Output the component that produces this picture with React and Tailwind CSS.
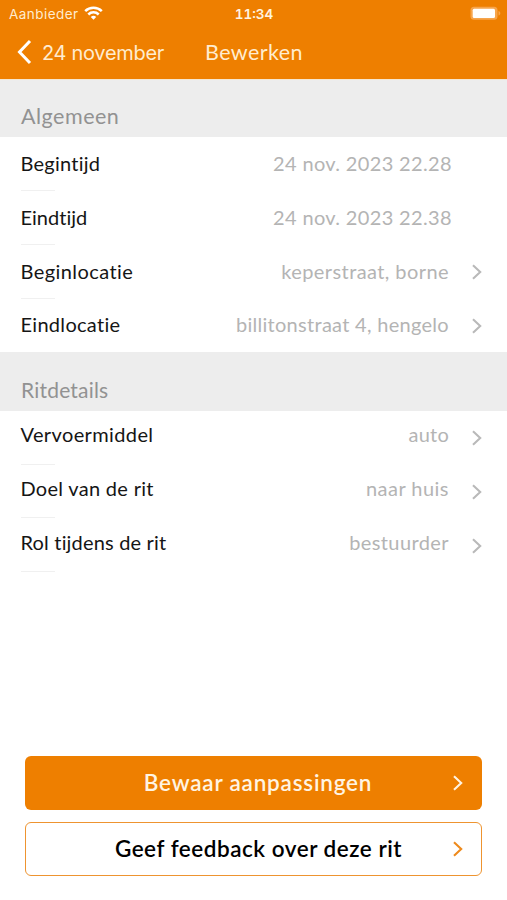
import React from 'react';

const general = [
  { label: 'Begintijd', value: '24 nov. 2023 22.28', labelClass: 'tracking-[0.25px]', valueClass: 'tracking-[0.35px]' },
  { label: 'Eindtijd', value: '24 nov. 2023 22.38', labelClass: 'tracking-[0.02px]', valueClass: 'tracking-[0.35px]' },
  { label: 'Beginlocatie', value: 'keperstraat, borne', link: true, labelClass: 'tracking-[0.42px]', valueClass: 'tracking-[0.42px]' },
  { label: 'Eindlocatie', value: 'billitonstraat 4, hengelo', link: true, labelClass: 'tracking-[0.3px]', valueClass: 'tracking-[0.29px]' },
];

const details = [
  { label: 'Vervoermiddel', value: 'auto', link: true, labelClass: 'tracking-[0.38px]', valueClass: 'tracking-[0.25px]' },
  { label: 'Doel van de rit', value: 'naar huis', link: true, labelClass: 'tracking-[0.3px]', valueClass: 'tracking-[0.47px]' },
  { label: 'Rol tijdens de rit', value: 'bestuurder', link: true, labelClass: 'tracking-[0.18px]', valueClass: 'tracking-[0.4px]' },
];

const Chevron = ({ className }) => (
  <svg className={className} width="12" height="18" viewBox="0 0 12 18" fill="none" stroke="currentColor" strokeWidth="2.1">
    <path d="M2 2.3 9.2 9 2 15.7" />
  </svg>
);

const StatusBar = () => (
  <div className="grid h-7 grid-cols-3 items-center pl-[9px] pr-[6px] font-['Inter',sans-serif] text-[13.5px] text-[#ffeccf]">
    <div className="flex items-center gap-[5px]">
      <span className="tracking-[0.45px]">Aanbieder</span>
      <svg className="-mt-[2px]" width="19" height="14" viewBox="0 0 19 14" fill="none" stroke="#fff" strokeWidth="2.5">
        <path d="M1.2 5.1a11.8 11.8 0 0 1 16.6 0" />
        <path d="M4.3 8.5a7.4 7.4 0 0 1 10.4 0" />
        <path d="M9.5 13.8 6.8 11a3.9 3.9 0 0 1 5.4 0z" fill="#fff" stroke="none" />
      </svg>
    </div>
    <span className="-ml-[2px] text-center font-semibold tabular-nums text-[#fff4e2]">11:34</span>
    <svg className="-mt-px justify-self-end" width="31" height="15" viewBox="0 0 31 15">
      <rect x="0.5" y="0.7" width="27" height="13" rx="3.5" fill="#f6a54d" />
      <rect x="2.7" y="2.7" width="22.3" height="9.3" rx="1.5" fill="#fff" />
      <path d="M28.5 5v4.6c1-.3 1.8-1.2 1.8-2.3S29.5 5.3 28.5 5z" fill="#f6a54d" />
    </svg>
  </div>
);

const SectionHeader = ({ children, className }) => (
  <h2 className={`flex h-[58.3px] items-end bg-[#ededed] px-[21px] pb-[8px] leading-[26px] text-[#929292] ${className}`}>
    {children}
  </h2>
);

const Row = ({ item, last, raised }) => (
  <div className="flex h-[53.8px] flex-col pl-[20.5px] pr-[24px]">
    <div className={`flex flex-1 items-center text-[20px] ${raised ? 'pb-[4px]' : ''}`}>
      <span className={`flex-1 pb-[1.5px] text-[#151515] ${item.labelClass}`}>{item.label}</span>
      <span className={`pb-[1.5px] text-[#b4b4b4] ${item.link ? 'mr-[22px]' : 'mr-[31px]'} ${item.valueClass}`}>{item.value}</span>
      {item.link && <Chevron className={`text-[#b9b9b9] ${raised ? 'mt-[6px]' : 'mt-px'}`} />}
    </div>
    <div className={`h-px w-[34px] ${last ? '' : 'bg-[#f0f0f0]'}`} />
  </div>
);

export default function App() {
  return (
    <div className="flex h-[900px] w-[507px] flex-col overflow-hidden bg-white font-['Lato',sans-serif]">
      <header className="h-[79px] bg-[#ee7f00]">
        <StatusBar />
        <div className="flex h-[50px] items-center pl-[16px] text-[#ffeccf]">
          <svg className="-mt-[2px]" width="17" height="26" viewBox="0 0 17 26" fill="none" stroke="#fff" strokeWidth="3">
            <path d="M14 2 3.5 13 14 24" />
          </svg>
          <span className="ml-[9px] w-[163px] font-['Inter',sans-serif] text-[20px] tracking-[-0.3px]">24 november</span>
          <h1 className="-mt-[2px] text-[21.5px] tracking-[0.42px]">Bewerken</h1>
        </div>
      </header>

      <SectionHeader className="border-t border-[#f5e6d0] text-[21.5px] tracking-[0.5px]">Algemeen</SectionHeader>
      {general.map((item, index) => (
        <Row key={item.label} item={item} last={index === general.length - 1} />
      ))}

      <SectionHeader className="text-[21px] tracking-[0.2px]">Ritdetails</SectionHeader>
      {details.map((item) => (
        <Row key={item.label} item={item} raised />
      ))}

      <div className="mt-auto flex flex-col gap-[12px] px-[25px] pb-[24.5px]">
        <button className="flex h-[54px] items-center rounded-md bg-[#ee7f00] pl-[39px] pr-[18px] text-[22.5px] font-semibold text-[#fff4e2]">
          <span className="flex-1 text-center tracking-[0.8px]">Bewaar aanpassingen</span>
          <Chevron />
        </button>
        <button className="flex h-[54px] items-center rounded-md border-[1.5px] border-[#ee9430] pl-[39px] pr-[17px] text-[22.5px] font-semibold text-black">
          <span className="flex-1 text-center tracking-[0.52px]">Geef feedback over deze rit</span>
          <Chevron className="text-[#ee8a1c]" />
        </button>
      </div>
    </div>
  );
}
